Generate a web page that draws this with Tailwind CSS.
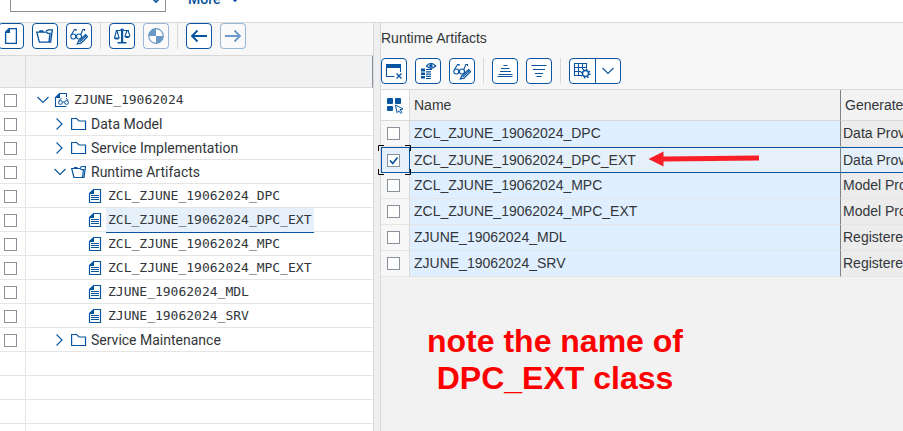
<!DOCTYPE html>
<html lang="en">
<head>
<meta charset="utf-8">
<title>Service Builder</title>
<script src="https://cdn.jsdelivr.net/npm/@tailwindcss/browser@4"></script>
</head>
<body class="h-screen overflow-hidden flex flex-col bg-[#f7f7f7] font-['Liberation_Sans',sans-serif] text-sm text-[#32363a]">
<svg class="hidden" xmlns="http://www.w3.org/2000/svg">
  <symbol id="i-down" viewBox="0 0 14 16"><path d="M1.500 5l5.500 5.500L12.500 5" fill="none" stroke="currentColor" stroke-width="1.100"/></symbol>
  <symbol id="i-right" viewBox="0 0 14 16"><path d="M3.500 2.500L9 8l-5.500 5.500" fill="none" stroke="currentColor" stroke-width="1.100"/></symbol>
  <symbol id="i-folder" viewBox="0 0 16 16"><path d="M.6 13.500v-11h5l2.500 2.500h6.400v8.500z" fill="none" stroke="currentColor" stroke-width="1.200"/></symbol>
  <symbol id="i-open" viewBox="0 0 16 16"><path d="M3 13.500L.7 4.500h8.600l1.200 1.200h2L11.500 13.500zM3.500 4.500v-1h3M9 3.500l2-1h3.500L13 13.500h-2" fill="none" stroke="currentColor" stroke-width="1.200"/></symbol>
  <symbol id="i-doc" viewBox="0 0 16 16"><path d="M5.500 1.500h7v13h-11v-9z" fill="none" stroke="currentColor" stroke-width="1.200"/><path d="M1 6l5-5v5z" fill="currentColor"/><path d="M3 7.500h8M3 9.500h8M3 11.500h8" stroke="currentColor" stroke-width="1"/></symbol>
  <symbol id="i-docglasses" viewBox="0 0 16 16"><path d="M12.500 5V1.500h-7l-4 4v9h11" fill="none" stroke="currentColor" stroke-width="1.100"/><path d="M1 6l5-5v5z" fill="currentColor"/><g fill="none" stroke="currentColor"><circle cx="6.500" cy="10.500" r="1.900"/><circle cx="12.500" cy="10.500" r="1.900"/><path d="M8.500 10h2M4.800 9L7.500 6M14.200 9L12 6"/></g></symbol>
  <symbol id="i-page" viewBox="0 0 20 20"><path d="M8 2.600h7.400v14.800H4.600V6z" fill="none" stroke="currentColor" stroke-width="1.300"/><path d="M4 7l5-5v5z" fill="currentColor"/></symbol>
  <symbol id="i-edit" viewBox="0 0 20 20"><g fill="none" stroke="currentColor" stroke-width="1.100"><circle cx="4.300" cy="10.500" r="2.500"/><circle cx="10" cy="10.500" r="2.500"/><path d="M2.200 9L5.500 3.500h1.500v1.500M11.800 8.500l2-5h1.700v1.500M6.800 10h.8"/></g><path d="M16.800 8.500l-7 6-1.500 3.500 3.700-.8 6.500-6.500z" fill="white" stroke="currentColor" stroke-width="1.200"/><path d="M10.500 16l7-6.500" stroke="currentColor" stroke-width="1.100"/></symbol>
  <symbol id="i-scale" viewBox="0 0 20 20"><g fill="none" stroke="currentColor" stroke-width="1.100"><path d="M4 4.500h4l2-1.500 2 1.500h5M4.500 4.500l-2 7.500M5 4.500l2 7.500M15 4.500L13 10M16 4.500l2 5.500"/></g><path d="M9 3h2.200v13H9zM5.500 16h9v1.600h-9zM1.800 11.500h6c-.5 2.700-5.500 2.700-6 0zM12.300 10h6c-.5 2.700-5.500 2.700-6 0z" fill="currentColor"/></symbol>
  <symbol id="i-pie" viewBox="0 0 20 20"><circle cx="10" cy="10" r="7.300" fill="white" stroke="currentColor" stroke-width="1.200"/><path d="M10 10V2.700A7.300 7.300 0 0 0 2.700 10zM10 10v7.300A7.300 7.300 0 0 0 17.300 10z" fill="currentColor"/></symbol>
  <symbol id="i-left-arrow" viewBox="0 0 20 20"><path d="M18 10H3M8.500 4.500L3 10l5.500 5.500" fill="none" stroke="currentColor" stroke-width="1.900"/></symbol>
  <symbol id="i-right-arrow" viewBox="0 0 20 20"><path d="M2 10h15M11.500 4.500L17 10l-5.500 5.500" fill="none" stroke="currentColor" stroke-width="1.800"/></symbol>
  <symbol id="i-window" viewBox="0 0 20 20"><path d="M2 3h15v4H2z" fill="currentColor"/><path d="M2.500 6v9.500h8M16.500 6v5" fill="none" stroke="currentColor" stroke-width="1.100"/><path d="M12.500 12.500l5 5m0-5l-5 5" stroke="currentColor" stroke-width="1.300"/></symbol>
  <symbol id="i-detail" viewBox="0 0 20 20"><path d="M8.500 5Q13-.2 17.800 5 13 9.500 8.500 5z" fill="none" stroke="currentColor" stroke-width="1.200"/><circle cx="13" cy="4.700" r="1.800" fill="currentColor"/><path d="M3 7.500h4v3H3zM3 11.500h4v2.500H3zM3 15h4v2.500H3z" fill="currentColor"/><path d="M8 8.500h6M8 10.800h5M8 13.200h5M8 15.400h5M8 17.500h5" stroke="currentColor" stroke-width="1.200"/></symbol>
  <symbol id="i-asc" viewBox="0 0 20 20"><path d="M8.500 4.500h4M6 7.500h8.500M5 10.500h11M3.500 13.500h14M2.500 15.500h15" stroke="currentColor"/></symbol>
  <symbol id="i-desc" viewBox="0 0 20 20"><path d="M2.500 4.500h15M4 8.500h12M6 12.500h8M7.500 15.500h5" stroke="currentColor" stroke-width="1.100"/></symbol>
  <symbol id="i-grid" viewBox="0 0 20 20"><path d="M9 14.500H2.500v-12h12V7M2.500 6.500h12M2.500 10.500H9M6.500 2.500v12M10.500 2.500V8" fill="none" stroke="currentColor" stroke-width="1.100"/><circle cx="13.500" cy="12.500" r="3" fill="white" stroke="currentColor" stroke-width="1.400"/><circle cx="13.500" cy="12.500" r="4.300" fill="none" stroke="currentColor" stroke-width="1.500" stroke-dasharray="1.500 1.880"/></symbol>
  <symbol id="i-select" viewBox="0 0 18 18"><rect x="1" y="2" width="6" height="6" rx="1" fill="currentColor"/><rect x="9" y="2" width="6" height="6" rx="1" fill="currentColor"/><rect x="1" y="10" width="6" height="5" rx="1" fill="currentColor"/><path d="M9.500 9l7.500 4-3 .7 2 2.600-1.300 1-2-2.600-1.700 2z" fill="white" stroke="currentColor"/></symbol>
</svg>

<header class="h-[23px] shrink-0 bg-white border-b border-[#d9d9d9] flex items-end gap-[22px] pl-[10px] overflow-hidden">
  <div class="relative w-[156px] h-[26px] mb-[10px] shrink-0">
    <input aria-label="Command" class="w-full h-full border border-[#89919a] bg-white outline-none">
    <svg class="absolute right-1 bottom-[5px] w-[14px] h-4 text-[#0854a0]" ><path d="M4 7l4 4 4-4" fill="none" stroke="currentColor" stroke-width="1.600"/></svg>
  </div>
  <button class="flex items-center gap-2 h-[26px] mb-[10px] text-[#0854a0] text-sm font-['Roboto',sans-serif] font-medium">More
    <svg class="w-3 h-3"><path d="M2 4l4 4 4-4" fill="none" stroke="currentColor" stroke-width="1.600"/></svg>
  </button>
</header>

<main class="flex-1 min-h-0 grid grid-cols-[374px_7px_minmax(0,1fr)]">
  <section class="flex flex-col min-w-0 overflow-hidden border-r border-[#d9d9d9] bg-white">
    <div class="h-[33px] shrink-0 border-b border-[#d9d9d9] bg-[#f7f7f7] flex items-start gap-2 text-[#0854a0]">
      <button aria-label="Create" class="-ml-0.5 w-[26px] h-[26px] border border-[#0854a0] rounded bg-white grid place-items-center"><svg class="w-5 h-5"><use href="#i-page"/></svg></button>
      <button aria-label="Open" class="w-[26px] h-[26px] border border-[#0854a0] rounded bg-white grid place-items-center"><svg class="w-[18px] h-[18px]"><use href="#i-open"/></svg></button>
      <button aria-label="Display or change" class="w-[26px] h-[26px] border border-[#0854a0] rounded bg-white grid place-items-center"><svg class="w-5 h-5"><use href="#i-edit"/></svg></button>
      <span class="w-px h-[26px] bg-[#d9d9d9]"></span>
      <button aria-label="Check" class="w-[26px] h-[26px] border border-[#0854a0] rounded bg-white grid place-items-center"><svg class="w-5 h-5"><use href="#i-scale"/></svg></button>
      <button disabled aria-label="Generate" class="w-[26px] h-[26px] border border-[#0854a0]/40 rounded bg-white/40 grid place-items-center text-[#6b98c6]"><svg class="w-5 h-5"><use href="#i-pie"/></svg></button>
      <span class="w-px h-[26px] bg-[#d9d9d9]"></span>
      <button aria-label="Back" class="w-[26px] h-[26px] border border-[#0854a0] rounded bg-white grid place-items-center"><svg class="w-5 h-5"><use href="#i-left-arrow"/></svg></button>
      <button disabled aria-label="Forward" class="w-[26px] h-[26px] border border-[#0854a0]/40 rounded bg-white/40 grid place-items-center text-[#6b98c6]"><svg class="w-5 h-5"><use href="#i-right-arrow"/></svg></button>
    </div>
    <table class="w-full table-fixed border-separate border-spacing-0 font-['Roboto',sans-serif] [&_td]:h-6 [&_td]:p-0 [&_td]:pt-px [&_td]:border-b [&_td]:border-[#e5e5e5] [&_td:first-child]:border-r [&_input]:block [&_input]:appearance-none [&_input]:w-[13px] [&_input]:h-[13px] [&_input]:ml-1 [&_input]:border [&_input]:border-[#89919a] [&_input]:bg-white [&_svg]:shrink-0 [&_svg]:h-4 [&_svg]:text-[#0854a0]">
      <colgroup><col class="w-[26px]"><col></colgroup>
      <thead><tr class="bg-[#f2f2f2]"><th class="h-8 p-0 border-b border-r border-[#d9d9d9]"></th><th class="h-8 p-0 border-b border-b-[#d9d9d9] border-r border-r-[#89919a]"></th></tr></thead>
      <tbody>
        <tr><td><input type="checkbox" aria-label="ZJUNE_19062024"></td><td><div class="flex items-center h-[22px] pl-[10px]"><svg class="w-[14px] mr-1"><use href="#i-down"/></svg><svg class="w-4 mr-0.5"><use href="#i-docglasses"/></svg><span class="px-0.5 text-[13px] font-['DejaVu_Sans_Mono',monospace]">ZJUNE_19062024</span></div></td></tr>
        <tr><td><input type="checkbox" aria-label="Data Model"></td><td><div class="flex items-center h-[22px] pl-[27px]"><svg class="w-[14px] mr-1"><use href="#i-right"/></svg><svg class="w-4 mr-0.5"><use href="#i-folder"/></svg><span class="px-0.5">Data Model</span></div></td></tr>
        <tr><td><input type="checkbox" aria-label="Service Implementation"></td><td><div class="flex items-center h-[22px] pl-[27px]"><svg class="w-[14px] mr-1"><use href="#i-right"/></svg><svg class="w-4 mr-0.5"><use href="#i-folder"/></svg><span class="px-0.5">Service Implementation</span></div></td></tr>
        <tr><td><input type="checkbox" aria-label="Runtime Artifacts"></td><td><div class="flex items-center h-[22px] pl-[27px]"><svg class="w-[14px] mr-1"><use href="#i-down"/></svg><svg class="w-4 mr-0.5"><use href="#i-open"/></svg><span class="px-0.5">Runtime Artifacts</span></div></td></tr>
        <tr><td><input type="checkbox" aria-label="ZCL_ZJUNE_19062024_DPC"></td><td><div class="flex items-center h-[22px] pl-[62px]"><svg class="w-4 mr-0.5"><use href="#i-doc"/></svg><span class="px-0.5 text-[13px] font-['DejaVu_Sans_Mono',monospace]">ZCL_ZJUNE_19062024_DPC</span></div></td></tr>
        <tr><td><input type="checkbox" aria-label="ZCL_ZJUNE_19062024_DPC_EXT"></td><td><div class="flex items-center h-[22px] pl-[62px]"><svg class="w-4 mr-0.5"><use href="#i-doc"/></svg><span class="self-start -mt-px h-[25px] leading-6 bg-[#e5f0fa] border-b border-[#0854a0] px-0.5 text-[13px] font-['DejaVu_Sans_Mono',monospace]">ZCL_ZJUNE_19062024_DPC_EXT</span></div></td></tr>
        <tr><td><input type="checkbox" aria-label="ZCL_ZJUNE_19062024_MPC"></td><td><div class="flex items-center h-[22px] pl-[62px]"><svg class="w-4 mr-0.5"><use href="#i-doc"/></svg><span class="px-0.5 text-[13px] font-['DejaVu_Sans_Mono',monospace]">ZCL_ZJUNE_19062024_MPC</span></div></td></tr>
        <tr><td><input type="checkbox" aria-label="ZCL_ZJUNE_19062024_MPC_EXT"></td><td><div class="flex items-center h-[22px] pl-[62px]"><svg class="w-4 mr-0.5"><use href="#i-doc"/></svg><span class="px-0.5 text-[13px] font-['DejaVu_Sans_Mono',monospace]">ZCL_ZJUNE_19062024_MPC_EXT</span></div></td></tr>
        <tr><td><input type="checkbox" aria-label="ZJUNE_19062024_MDL"></td><td><div class="flex items-center h-[22px] pl-[62px]"><svg class="w-4 mr-0.5"><use href="#i-doc"/></svg><span class="px-0.5 text-[13px] font-['DejaVu_Sans_Mono',monospace]">ZJUNE_19062024_MDL</span></div></td></tr>
        <tr><td><input type="checkbox" aria-label="ZJUNE_19062024_SRV"></td><td><div class="flex items-center h-[22px] pl-[62px]"><svg class="w-4 mr-0.5"><use href="#i-doc"/></svg><span class="px-0.5 text-[13px] font-['DejaVu_Sans_Mono',monospace]">ZJUNE_19062024_SRV</span></div></td></tr>
        <tr><td><input type="checkbox" aria-label="Service Maintenance"></td><td><div class="flex items-center h-[22px] pl-[27px]"><svg class="w-[14px] mr-1"><use href="#i-right"/></svg><svg class="w-4 mr-0.5"><use href="#i-folder"/></svg><span class="px-0.5">Service Maintenance</span></div></td></tr>
        <tr><td></td><td></td></tr><tr><td></td><td></td></tr><tr><td></td><td></td></tr><tr><td></td><td></td></tr>
      </tbody>
    </table>
  </section>

  <div class="bg-[#edeff0] border-r border-[#d9d9d9]"></div>

  <section class="flex flex-col min-w-0 bg-[#f2f2f2]">
    <div class="shrink-0 bg-[#f7f7f7] h-[66px] flex flex-col">
      <h2 class="h-[35px] leading-[30px]">Runtime Artifacts</h2>
      <div class="flex gap-2 text-[#0854a0]">
        <button aria-label="Delete" class="w-[26px] h-[26px] border border-[#0854a0] rounded bg-white grid place-items-center"><svg class="w-5 h-5"><use href="#i-window"/></svg></button>
        <button aria-label="Details" class="w-[26px] h-[26px] border border-[#0854a0] rounded bg-white grid place-items-center"><svg class="w-5 h-5"><use href="#i-detail"/></svg></button>
        <button aria-label="Display or change" class="w-[26px] h-[26px] border border-[#0854a0] rounded bg-white grid place-items-center"><svg class="w-5 h-5"><use href="#i-edit"/></svg></button>
        <span class="w-px h-[26px] bg-[#d9d9d9]"></span>
        <button aria-label="Sort ascending" class="w-[26px] h-[26px] border border-[#0854a0] rounded bg-white grid place-items-center"><svg class="w-5 h-5"><use href="#i-asc"/></svg></button>
        <button aria-label="Sort descending" class="w-[26px] h-[26px] border border-[#0854a0] rounded bg-white grid place-items-center"><svg class="w-5 h-5"><use href="#i-desc"/></svg></button>
        <span class="w-px h-[26px] bg-[#d9d9d9]"></span>
        <div class="flex w-[52px] h-[26px] border border-[#0854a0] rounded bg-white overflow-hidden">
          <button aria-label="Layout" class="flex-1 grid place-items-center"><svg class="w-5 h-5"><use href="#i-grid"/></svg></button>
          <button aria-label="Layout options" class="flex-1 grid place-items-center border-l border-[#0854a0]"><svg class="w-[14px] h-4"><use href="#i-down"/></svg></button>
        </div>
      </div>
    </div>
    <div class="relative">
      <table class="w-full table-fixed border-separate border-spacing-0 whitespace-nowrap border-t border-[#d9d9d9] [&_td]:p-0 [&_td]:h-[26px] [&_td]:pb-0.5 [&_td:first-child]:pb-0 [&_td]:leading-5 [&_td]:border-b [&_td]:border-b-[#e5e5e5] [&_td:nth-child(1)]:bg-[#f7f7f7] [&_td:nth-child(1)]:border-r [&_td:nth-child(1)]:border-r-[#d9d9d9] [&_td:nth-child(2)]:bg-[#e0efff] [&_td:nth-child(2)]:border-r [&_td:nth-child(2)]:border-r-[#808488] [&_td:nth-child(2)]:pl-1 [&_td:nth-child(3)]:bg-[#ececec] [&_td:nth-child(3)]:pl-0.5 [&_input]:block [&_input]:appearance-none [&_input]:w-[13px] [&_input]:h-[13px] [&_input]:ml-1.5 [&_input]:border [&_input]:border-[#89919a] [&_input]:bg-white">
        <colgroup><col class="w-[29px]"><col><col class="w-[62px]"></colgroup>
        <thead>
          <tr class="text-left">
            <th class="p-0 h-[31px] bg-white border-b border-r border-[#d9d9d9]"><button aria-label="Select all" class="block ml-[5px] text-[#0854a0]"><svg class="w-[18px] h-[18px]"><use href="#i-select"/></svg></button></th>
            <th class="p-0 pl-1 font-normal border-b border-b-[#d9d9d9] border-r border-r-[#808488]">Name</th>
            <th class="p-0 pl-1 font-normal border-b border-b-[#d9d9d9] overflow-hidden">Generate</th>
          </tr>
        </thead>
        <tbody>
          <tr><td><input type="checkbox" aria-label="Select ZCL_ZJUNE_19062024_DPC"></td><td>ZCL_ZJUNE_19062024_DPC</td><td class="overflow-hidden">Data Prov</td></tr>
          <tr class="[&_td]:pb-0! [&_td]:border-t [&_td]:border-t-[#0854a0] [&_td]:border-b-[#0854a0]! [&_td:nth-child(2)]:bg-[#e5f0fa]! [&_td:nth-child(3)]:bg-[#e5f0fa]!">
            <td class="relative border-l border-[#0854a0] border-r-[#0854a0]! bg-[#e5f0fa]!">
              <label class="relative block w-[13px]"><input type="checkbox" checked aria-label="Select ZCL_ZJUNE_19062024_DPC_EXT" class="ml-[5px]!"><svg class="absolute left-[5px] top-0 w-[13px] h-[13px] pointer-events-none"><path d="M3 6.500l2.700 3L10.500 3.500" fill="none" stroke="#0854a0" stroke-width="1.700"/></svg></label>
              <svg class="absolute -left-1 -top-[3px] w-[33px] h-[30px] pointer-events-none"><path d="M.5 6V.5H6M27 .5h5.500V6M32.500 24v5.500H27M6 29.500H.5V24" fill="none" stroke="black"/></svg>
            </td>
            <td>ZCL_ZJUNE_19062024_DPC_EXT</td><td class="overflow-hidden">Data Prov</td></tr>
          <tr><td><input type="checkbox" aria-label="Select ZCL_ZJUNE_19062024_MPC"></td><td>ZCL_ZJUNE_19062024_MPC</td><td class="overflow-hidden">Model Pro</td></tr>
          <tr><td><input type="checkbox" aria-label="Select ZCL_ZJUNE_19062024_MPC_EXT"></td><td>ZCL_ZJUNE_19062024_MPC_EXT</td><td class="overflow-hidden">Model Pro</td></tr>
          <tr><td><input type="checkbox" aria-label="Select ZJUNE_19062024_MDL"></td><td>ZJUNE_19062024_MDL</td><td class="overflow-hidden">Registere</td></tr>
          <tr><td><input type="checkbox" aria-label="Select ZJUNE_19062024_SRV"></td><td>ZJUNE_19062024_SRV</td><td class="overflow-hidden">Registere</td></tr>
        </tbody>
      </table>
      <svg class="absolute left-[267px] top-[62px] w-[112px] h-4 pointer-events-none"><path d="M.5 8L15.500.5V5.500L111 4.500V9.500L15.500 10.500V15.500z" fill="#fa1f26"/></svg>
    </div>
    <p class="pt-[46px] w-[348px] text-center text-[32px] leading-[37px] font-bold text-[#ff0000]">note the name of<br>DPC_EXT class</p>
  </section>
</main>
</body>
</html>
